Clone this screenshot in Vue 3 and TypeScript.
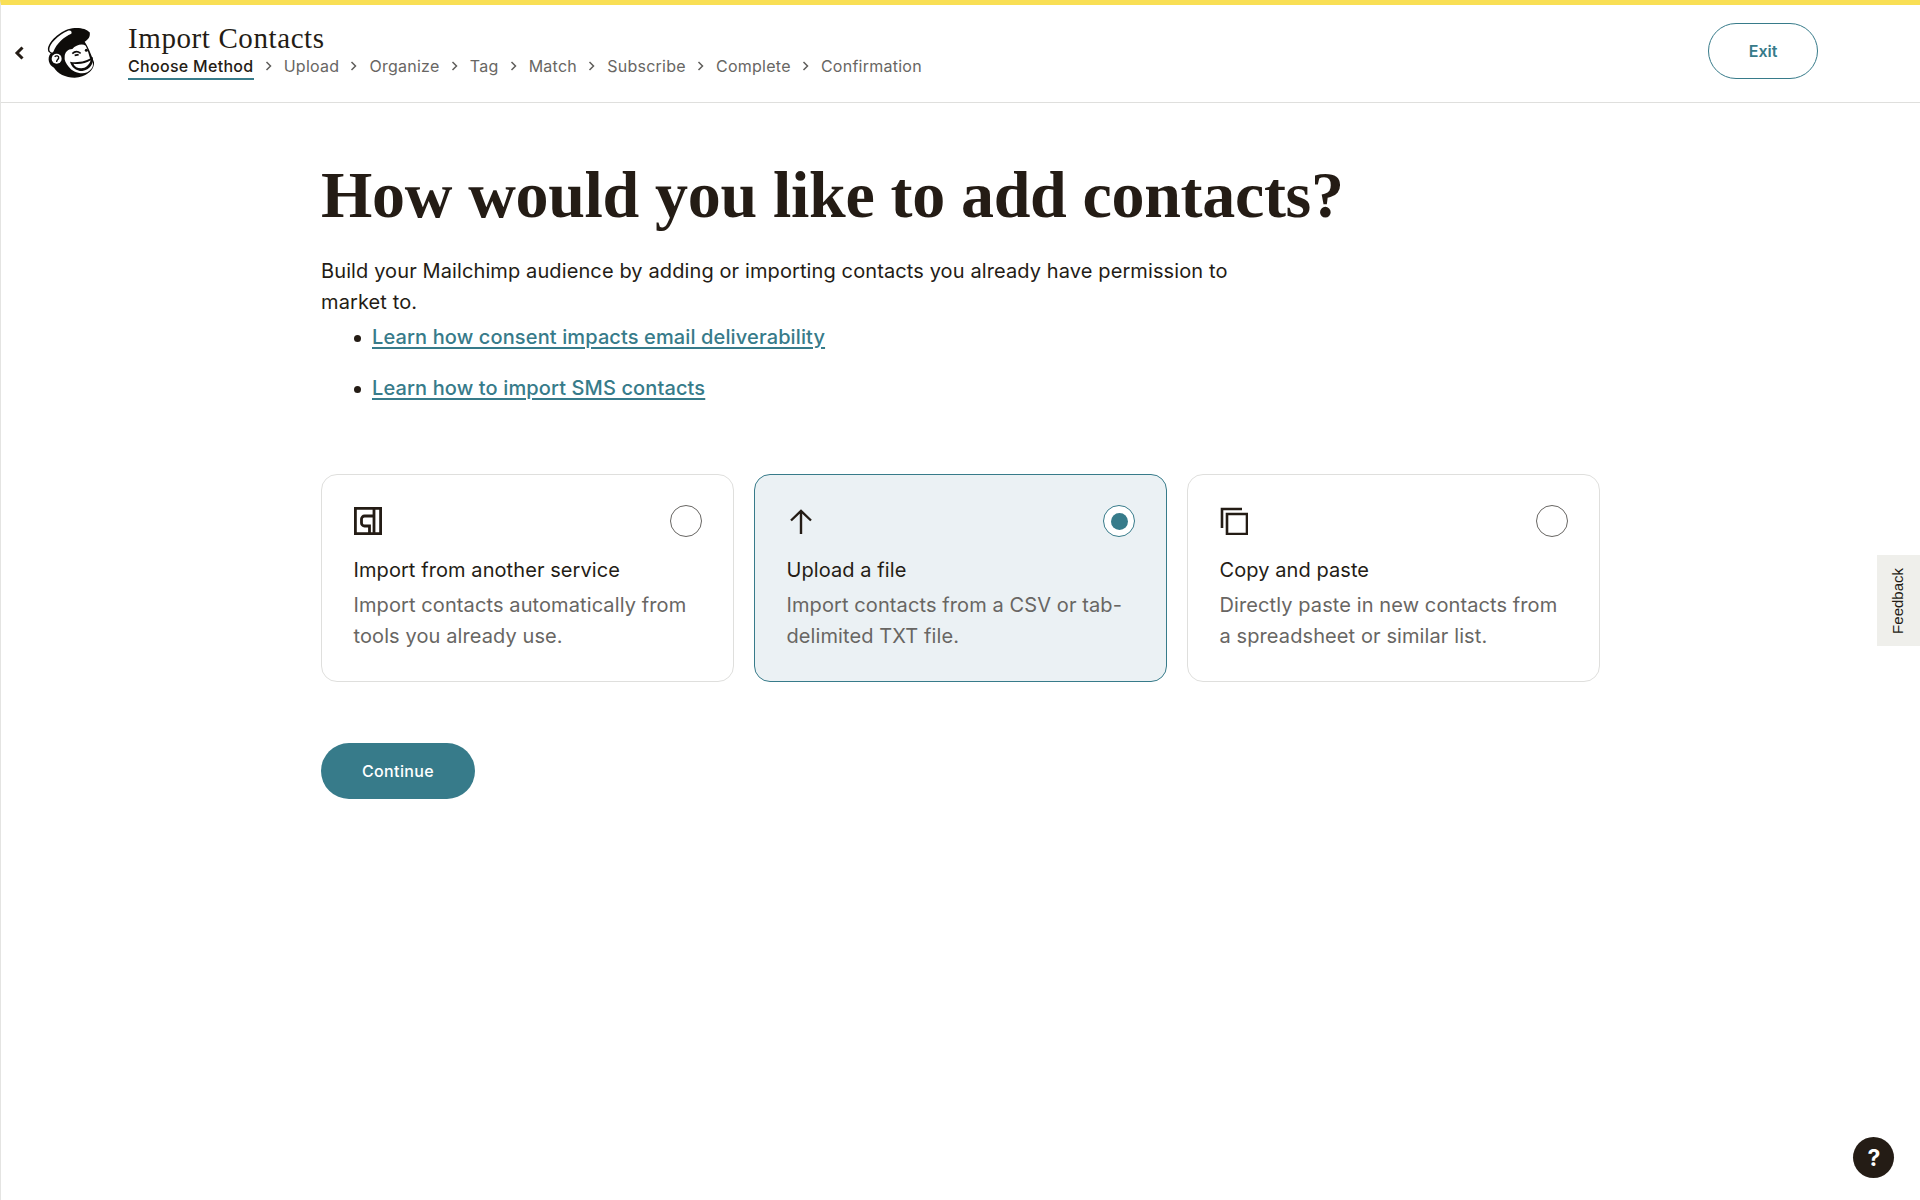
<script setup lang="ts">
interface Option { title: string; lines: string; icon: string; selected?: boolean }
const steps: string[] = ['Upload', 'Organize', 'Tag', 'Match', 'Subscribe', 'Complete', 'Confirmation']
const options: Option[] = [
  { title: 'Import from another service', lines: 'Import contacts automatically from tools you already use.', icon: 'service' },
  { title: 'Upload a file', lines: 'Import contacts from a CSV or tab-delimited TXT file.', icon: 'upload', selected: true },
  { title: 'Copy and paste', lines: 'Directly paste in new contacts from a spreadsheet or similar list.', icon: 'copy' }
]
</script>

<template>
  <div class="page">
    <header class="header">
      <button class="back" aria-label="Back">
        <svg width="12" height="16" viewBox="0 0 12 16"><path d="M9.500 2.500 4 8l5.500 5.500" fill="none" stroke="#241c15" stroke-width="3"/></svg>
      </button>
      <svg class="logo" width="54" height="56" viewBox="0 0 162 168" aria-label="Mailchimp">
        <path d="M12 75C10 55 40 25 72 13 95 5 125 8 137 22c3 13-5 23-15 28 10 15 18 35 28 62 2 23-25 46-58 46-27 0-52-13-62-30-15-6-22-28-10-43-5-3-8-5-8-10Z" fill="#0e0c0a"/>
        <path d="M16 75C14 58 42 30 72 17c8-3 13 3 10 9-22 9-44 29-54 54-4 5-10 2-12-5Z" fill="#fff"/>
        <path d="M62 95c0-13 10-23 23-23 10-12 30-17 40-10 7 13 10 28 13 38 14 15 12 30-8 42-20 8-45-2-56-17-8-10-14-20-12-30Z" fill="#fff"/>
        <circle cx="38" cy="101" r="15" fill="#fff"/>
        <path d="M32 95c5-5 13-2 12 4-1 5-7 5-6 12" fill="none" stroke="#0e0c0a" stroke-width="4"/>
        <path d="M78 110c22 5 52-2 68-14 4 19-8 39-31 42-20 0-33-13-37-28Z" fill="#0e0c0a"/>
        <path d="M88 116c17 4 40-2 52-10-4 14-15 24-28 24-12 0-20-5-24-14Z" fill="#fff"/>
        <path d="M85 86c7-7 17-7 25-1M92 91l12-2" fill="none" stroke="#0e0c0a" stroke-width="5"/>
        <circle cx="127" cy="76" r="4.500" fill="#0e0c0a"/>
      </svg>
      <div class="titles">
        <div class="app-title">Import Contacts</div>
        <nav class="steps">
          <span class="step current">Choose Method</span>
          <template v-for="s in steps" :key="s">
            <svg class="chev" width="8" height="10" viewBox="0 0 8 10"><path d="M1.500 1 5.500 5l-4 4" fill="none" stroke="#5f5d5a" stroke-width="1.500"/></svg>
            <span class="step">{{ s }}</span>
          </template>
        </nav>
      </div>
      <button class="exit">Exit</button>
    </header>

    <main class="main">
      <h1 class="heading">How would you like to add contacts?</h1>
      <p class="intro">Build your Mailchimp audience by adding or importing contacts you already have permission to market to.</p>
      <ul class="links">
        <li><a href="#">Learn how consent impacts email deliverability</a></li>
        <li><a href="#">Learn how to import SMS contacts</a></li>
      </ul>

      <div class="cards">
        <div v-for="o in options" :key="o.title" class="card" :class="{ selected: o.selected }">
          <div class="card-top">
            <svg v-if="o.icon === 'service'" class="icon" width="28" height="28" viewBox="0 0 28 28">
              <path d="M1.400 1.400h25.200v25.200H1.400z" fill="none" stroke="#241c15" stroke-width="2.800"/>
              <path d="M20 2v25M20 9h-9.500a3 3 0 0 0-3 3v4a3 3 0 0 0 3 3h5v8" fill="none" stroke="#241c15" stroke-width="2.800"/>
            </svg>
            <svg v-else-if="o.icon === 'upload'" class="icon" width="28" height="28" viewBox="0 0 28 28">
              <path d="M14 27V5M4 13.500 14 4l10 9.500" fill="none" stroke="#241c15" stroke-width="2.400"/>
            </svg>
            <svg v-else class="icon" width="28" height="28" viewBox="0 0 28 28">
              <path d="M7 7h20v20H7z" fill="none" stroke="#241c15" stroke-width="2.600"/>
              <path d="M2 21V2h20" fill="none" stroke="#241c15" stroke-width="2.600"/>
            </svg>
            <span class="radio"><span v-if="o.selected" class="dot"></span></span>
          </div>
          <div class="card-title">{{ o.title }}</div>
          <p class="card-desc">{{ o.lines }}</p>
        </div>
      </div>

      <button class="continue">Continue</button>
    </main>

    <aside class="feedback"><span>Feedback</span></aside>
    <button class="help" aria-label="Help">?</button>
  </div>
</template>

<style>
html, body { margin: 0; background: #fff; }
</style>

<style scoped>
.page {
  position: relative;
  min-height: 1200px;
  box-sizing: border-box;
  border-top: 5px solid #f9df55;
  border-left: 1px solid #e4e4e2;
  font-family: Inter, "Liberation Sans", sans-serif;
  color: #241c15;
  overflow: hidden;
}
.header {
  height: 98px;
  box-sizing: border-box;
  border-bottom: 1px solid #dfdfdd;
  display: flex;
  align-items: center;
  padding-left: 12px;
  padding-right: 102px;
}
.back { border: 0; background: none; padding: 0; width: 12px; height: 16px; display: block; margin-right: 19px; margin-top: -1px; }
.logo { flex: none; margin-top: -1px; margin-right: 30px; }
.titles { flex: 1; display: flex; flex-direction: column; margin-top: -6px; }
.app-title {
  font-family: "Liberation Serif", serif;
  font-size: 29px;
  line-height: 34px;
  height: 30px;
  letter-spacing: 0.6px;
  color: #241c15;
}
.steps { display: flex; align-items: center; gap: 0; font-size: 16px; height: 30px; }
.step { color: #686663; line-height: 24px; letter-spacing: 0.25px; }
.step.current {
  color: #241c15;
  font-weight: 500;
  border-bottom: 2.500px solid #377b8a;
  line-height: 24px;
  margin-top: 2px;
  letter-spacing: 0.3px;
}
.chev { margin: 0 11.100px; flex: none; }
.exit {
  width: 110px;
  height: 56px;
  margin-top: -5px;
  border: 1.500px solid #377b8a;
  border-radius: 28px;
  background: #fff;
  color: #377b8a;
  font: 600 16px Inter, sans-serif;
}
.main { margin-left: 320px; width: 1279px; }
.heading {
  margin: 0;
  padding-top: 54px;
  font-family: "Liberation Serif", serif;
  font-weight: 700;
  font-size: 66px;
  line-height: 76px;
  letter-spacing: -0.33px;
  color: #241c15;
}
.intro {
  margin: 23px 0 0;
  width: 930px;
  font-size: 20px;
  line-height: 30.600px;
  letter-spacing: 0.11px;
  color: #241c15;
}
.links { margin: 0; padding: 0 0 0 51px; list-style: none; }
.links li { position: relative; margin-top: 4.500px; height: 46.500px; line-height: 30.600px; font-size: 20px; letter-spacing: 0.12px; }
.links li::before { content: ""; position: absolute; left: -18px; top: 13px; width: 7px; height: 7px; border-radius: 50%; background: #241c15; }
.links a { color: #377b8a; text-decoration: underline; text-underline-offset: 3px; font-weight: 500; }
.cards { display: grid; grid-template-columns: repeat(3, 413px); gap: 20px; margin-top: 55px; }
.card {
  box-sizing: border-box;
  height: 208px;
  border: 1.500px solid #dfdfdd;
  border-radius: 16px;
  padding: 30px 31px 0 31.500px;
  background: #fff;
}
.card.selected { border-color: #377b8a; background: #ebf1f4; }
.card-top { display: flex; justify-content: space-between; align-items: center; height: 32px; }
.icon { display: block; margin-left: 0.500px; }
.radio {
  width: 32px;
  height: 32px;
  box-sizing: border-box;
  border: 1.500px solid #686663;
  border-radius: 50%;
  background: #fff;
  display: flex;
  align-items: center;
  justify-content: center;
}
.selected .radio { border-color: #377b8a; }
.dot { width: 17px; height: 17px; border-radius: 50%; background: #377b8a; }
.card-title { margin-top: 18px; font-size: 20px; line-height: 30px; letter-spacing: 0.08px; color: #241c15; }
.card-desc { margin: 5px 0 0; font-size: 20px; line-height: 30.600px; letter-spacing: 0.1px; color: #686663; }
.continue {
  display: block;
  margin-top: 61px;
  width: 154px;
  height: 56px;
  border: 0;
  border-radius: 28px;
  background: #377b8a;
  color: #fff;
  font: 500 16px Inter, sans-serif;
  letter-spacing: 0.35px;
}
.feedback {
  position: absolute;
  right: 0;
  top: 550px;
  width: 43px;
  height: 91px;
  background: #efefeb;
  display: flex;
  align-items: center;
  justify-content: center;
}
.feedback span { writing-mode: vertical-rl; transform: rotate(180deg) translateX(1px); font: 15px "Liberation Sans", sans-serif; color: #241c15; }
.help {
  position: absolute;
  left: 1852px;
  top: 1132px;
  width: 41px;
  height: 41px;
  padding: 0 0 0 1px;
  border: 0;
  border-radius: 50%;
  background: #241c15;
  color: #fff;
  font: 700 23px Inter, sans-serif;
}
</style>
